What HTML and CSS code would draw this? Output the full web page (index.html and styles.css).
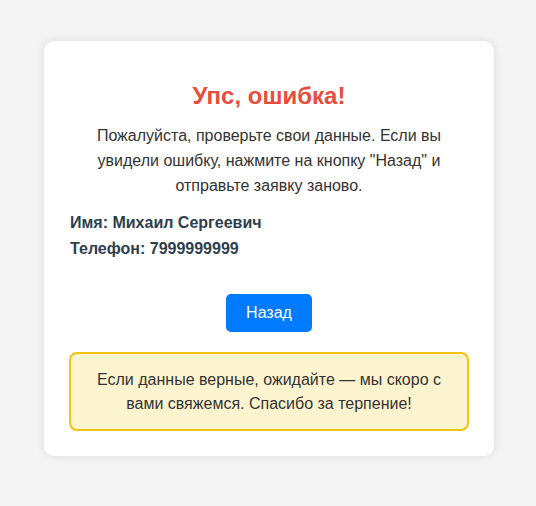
FILE: index.html
```html
<!DOCTYPE html>
<html lang="ru">
<head>
<meta charset="utf-8">
<title>Ошибка</title>
<link rel="stylesheet" href="styles.css">
</head>
<body>
<div class="card">
  <h1 class="title">Упс, ошибка!</h1>
  <p class="lead">Пожалуйста, проверьте свои данные. Если вы увидели ошибку, нажмите на кнопку "Назад" и отправьте заявку заново.</p>
  <div class="data">
    <p class="data-row">Имя: Михаил Сергеевич</p>
    <p class="data-row">Телефон: 7999999999</p>
  </div>
  <div class="actions">
    <button class="btn" type="button">Назад</button>
  </div>
  <div class="notice">Если данные верные, ожидайте — мы скоро с вами свяжемся. Спасибо за терпение!</div>
</div>
</body>
</html>
```
FILE: styles.css
```css
html, body {
  margin: 0;
  padding: 0;
}
body {
  background: #f4f4f4;
  font-family: "Liberation Sans", Arial, sans-serif;
  color: #333;
  padding: 41px 0 41px 2px;
}
.card {
  width: 400px;
  margin: 0 auto;
  padding: 25px;
  background: #fff;
  border-radius: 10px;
  box-shadow: 0 0 10px rgba(0, 0, 0, 0.1);
  text-align: center;
}
.title {
  font-size: 24px;
  color: #e74c3c;
  margin: 16px 0 14px;
}
.lead {
  font-size: 16px;
  line-height: 1.55;
  margin: 0 0 12px;
}
.data {
  text-align: left;
  color: #2c3e50;
  font-weight: bold;
  font-size: 16px;
  padding-left: 1px;
}
.data-row {
  margin: 0;
  line-height: 26px;
}
.actions {
  margin-top: 32px;
}
.btn {
  font-family: inherit;
  font-size: 16px;
  color: #fff;
  background: #007bff;
  border: none;
  border-radius: 5px;
  padding: 10px 20px;
  cursor: pointer;
}
.notice {
  margin-top: 20px;
  background: #fcf3cf;
  border: 2px solid #f1c40f;
  border-radius: 8px;
  padding: 14px 20px 13px;
  font-size: 16px;
  line-height: 1.5;
}
```
